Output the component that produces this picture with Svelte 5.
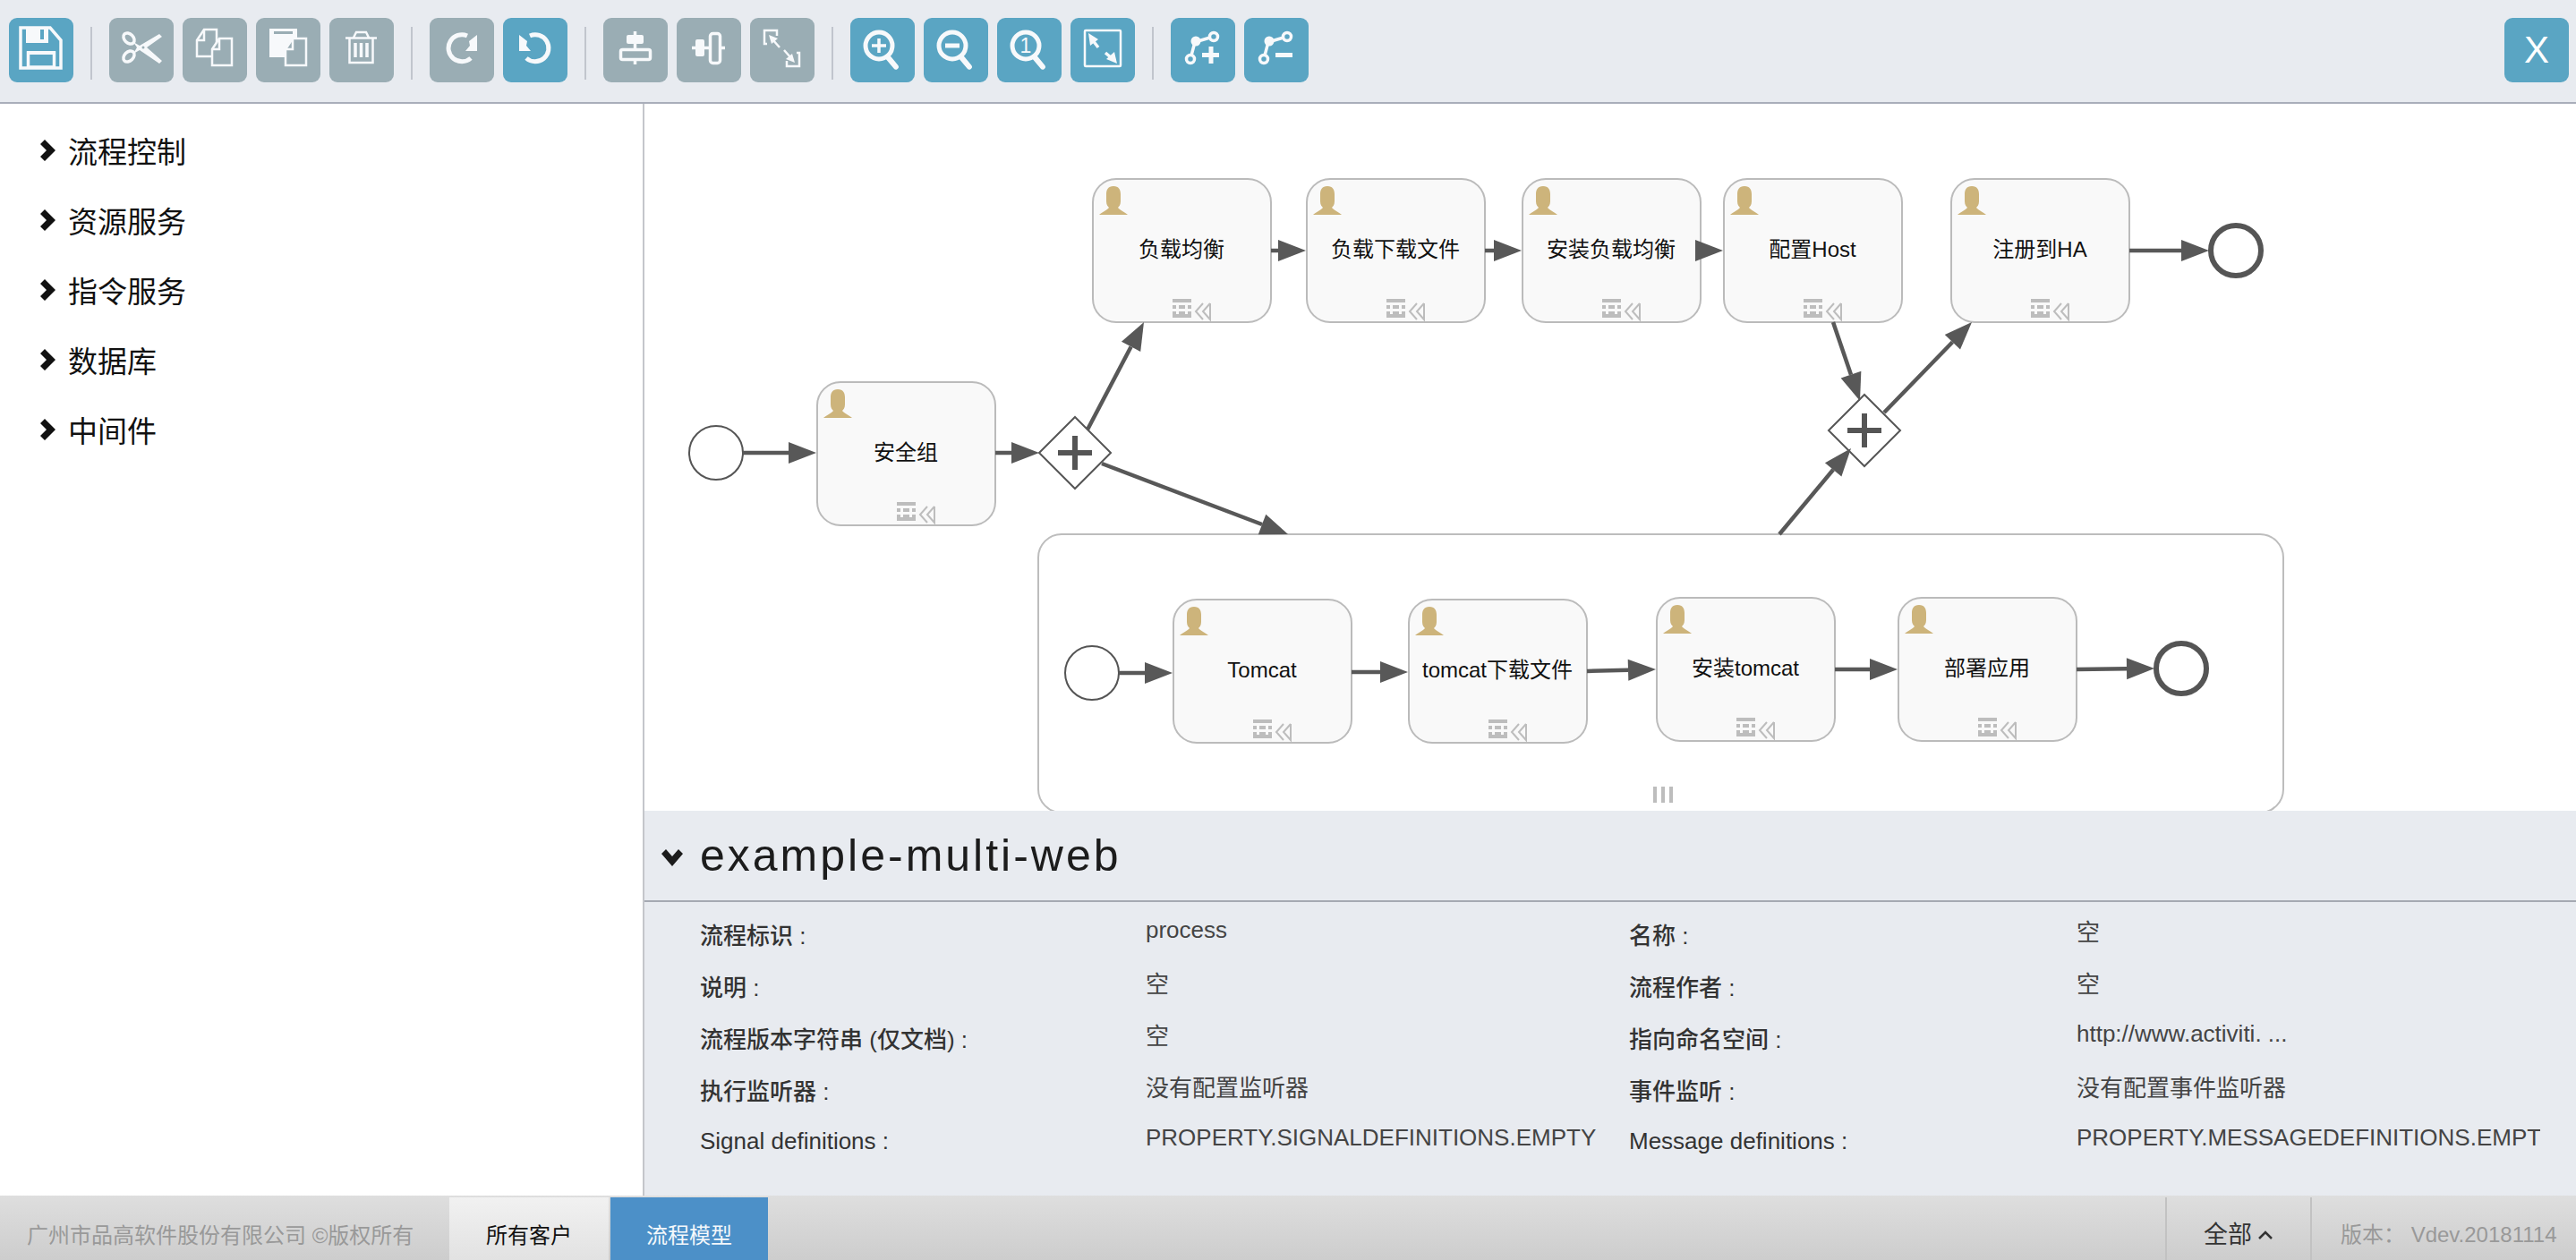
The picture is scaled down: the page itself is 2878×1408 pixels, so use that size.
<script>
  const tree = ['流程控制', '资源服务', '指令服务', '数据库', '中间件'];

  const tasks = [
    { x: 912, y: 426, label: '安全组' },
    { x: 1220, y: 199, label: '负载均衡' },
    { x: 1459, y: 199, label: '负载下载文件' },
    { x: 1700, y: 199, label: '安装负载均衡' },
    { x: 1925, y: 199, label: '配置Host' },
    { x: 2179, y: 199, label: '注册到HA' },
    { x: 1310, y: 669, label: 'Tomcat' },
    { x: 1573, y: 669, label: 'tomcat下载文件' },
    { x: 1850, y: 667, label: '安装tomcat' },
    { x: 2120, y: 667, label: '部署应用' }
  ];

  const flows = [
    [830, 506, 912, 506],
    [1112, 506, 1161, 506],
    [1215, 480, 1278, 360],
    [1231, 518, 1439, 597],
    [1420, 280, 1459, 280],
    [1659, 280, 1700, 280],
    [1900, 280, 1925, 280],
    [2048, 360, 2078, 448],
    [1988, 597, 2068, 501],
    [2105, 461, 2203, 360],
    [2379, 280, 2468, 280],
    [1250, 752, 1310, 752],
    [1510, 751, 1573, 751],
    [1773, 750, 1850, 748],
    [2050, 748, 2120, 748],
    [2320, 748, 2407, 747]
  ];

  const info = [
    ['流程标识 :', 'process', '名称 :', '空'],
    ['说明 :', '空', '流程作者 :', '空'],
    ['流程版本字符串 (仅文档) :', '空', '指向命名空间 :', 'http://www.activiti. ...'],
    ['执行监听器 :', '没有配置监听器', '事件监听 :', '没有配置事件监听器'],
    ['Signal definitions :', 'PROPERTY.SIGNALDEFINITIONS.EMPTY', 'Message definitions :', 'PROPERTY.MESSAGEDEFINITIONS.EMPTY']
  ];

  // line stops at the base of the arrow head
  function flow([x1, y1, x2, y2]) {
    const len = Math.hypot(x2 - x1, y2 - y1);
    const ux = (x2 - x1) / len;
    const uy = (y2 - y1) / len;
    const bx = x2 - ux * 31;
    const by = y2 - uy * 31;
    return {
      x1, y1, bx, by,
      head: `${x2},${y2} ${bx - uy * 12},${by + ux * 12} ${bx + uy * 12},${by - ux * 12}`
    };
  }
</script>

<div class="page">
  <header class="toolbar">
    <button class="tool blue" aria-label="save">
      <svg viewBox="0 0 72 72">
        <path class="line" d="M13 11H46L58 25V56H13Z" />
        <path class="solid" d="M19 11H44V28H19Z" />
        <path class="cut-blue" d="M35 13H39V24H35Z" />
        <path class="line" d="M21.500 39H50.500V55H21.500Z" />
        <path class="solid" d="M20 37H52V41H20Z" />
      </svg>
    </button>
    <i class="sep"></i>
    <button class="tool gray" aria-label="cut">
      <svg viewBox="0 0 72 72">
        <ellipse class="line" cx="22" cy="23" rx="7" ry="5" transform="rotate(45 22 23)" />
        <ellipse class="line" cx="22" cy="43" rx="7" ry="5" transform="rotate(-45 22 43)" />
        <path class="solid" d="M27 27L34 31L56 18L59 21L42 33L59 48L56 51L34 36L27 40L31 33Z" />
        <circle class="cut-gray" cx="38" cy="33" r="1.500" />
      </svg>
    </button>
    <button class="tool gray" aria-label="copy">
      <svg viewBox="0 0 72 72">
        <path class="line thin" d="M16 25L24 13H38V43H16Z" />
        <path class="line thin" d="M16 25H24V13" />
        <path class="line thin fill-gray" d="M33 35L41 23H55V53H33Z" />
        <path class="line thin" d="M33 35H41V23" />
      </svg>
    </button>
    <button class="tool gray" aria-label="paste">
      <svg viewBox="0 0 72 72">
        <path class="solid" d="M15 12H46V44H15Z" />
        <path class="cut-gray" d="M20 15H41V18H20Z" />
        <path class="line thin fill-gray" d="M33 35L41 23H56V53H33Z" />
        <path class="line thin" d="M33 35H41V23" />
      </svg>
    </button>
    <button class="tool gray" aria-label="delete">
      <svg viewBox="0 0 72 72">
        <path class="line thin" d="M18 22.500H53M27 22L30 16H41L44 22M22.500 23V50H48.500V23" />
        <path class="line" d="M29 28V44M35.500 28V44M42 28V44" />
      </svg>
    </button>
    <i class="sep"></i>
    <button class="tool gray" aria-label="redo">
      <svg viewBox="0 0 72 72">
        <path class="line wide" d="M42 20A15 15 0 1 0 46 45" />
        <path class="solid" d="M53 19V37H40L45 31L44 26Z" />
      </svg>
    </button>
    <button class="tool blue" aria-label="undo">
      <svg viewBox="0 0 72 72">
        <path class="line wide" d="M30 20A15 15 0 1 1 26 45" />
        <path class="solid" d="M18 19V37H31L26 31L27 26Z" />
      </svg>
    </button>
    <i class="sep"></i>
    <button class="tool gray" aria-label="align horizontal">
      <svg viewBox="0 0 72 72">
        <path class="line" d="M35.500 15V52" />
        <rect class="solid" x="26" y="19" width="19" height="10" rx="2" />
        <rect class="line fill-gray" x="19.500" y="35.500" width="33" height="11" rx="2" />
      </svg>
    </button>
    <button class="tool gray" aria-label="align vertical">
      <svg viewBox="0 0 72 72">
        <path class="line" d="M17 33.500H54" />
        <rect class="solid" x="21" y="24" width="10" height="19" rx="2" />
        <rect class="line fill-gray" x="37.500" y="17.500" width="11" height="33" rx="3" />
      </svg>
    </button>
    <button class="tool gray" aria-label="same size">
      <svg viewBox="0 0 72 72">
        <path class="line thin" d="M19 29H16V14H30V20" />
        <path class="line thin" d="M52 39H55V54H41V48" />
        <path class="line thin" d="M33 33L25 24M38 36L46 45" />
        <path class="solid" d="M21 19L31 23L24 29Z" />
        <path class="solid" d="M50 50L40 46L47 40Z" />
      </svg>
    </button>
    <i class="sep"></i>
    <button class="tool blue" aria-label="zoom in">
      <svg viewBox="0 0 72 72">
        <circle class="line wide" cx="32" cy="31" r="15" />
        <path class="line round" d="M42 44L54 51" transform="rotate(20 42 44)" />
        <path class="line" d="M32 23V39M24 31H40" />
      </svg>
    </button>
    <button class="tool blue" aria-label="zoom out">
      <svg viewBox="0 0 72 72">
        <circle class="line wide" cx="32" cy="31" r="15" />
        <path class="line round" d="M42 44L54 51" transform="rotate(20 42 44)" />
        <path class="line wide" d="M24 31H40" />
      </svg>
    </button>
    <button class="tool blue" aria-label="actual size">
      <svg viewBox="0 0 72 72">
        <circle class="line wide" cx="32" cy="31" r="15" />
        <path class="line round" d="M42 44L54 51" transform="rotate(20 42 44)" />
        <text class="one" x="32" y="39">1</text>
      </svg>
    </button>
    <button class="tool blue" aria-label="fit">
      <svg viewBox="0 0 72 72">
        <rect class="line thin" x="16" y="14" width="40" height="40" rx="1" />
        <path class="line" d="M31 33L24 24M39 39L46 45" />
        <path class="solid" d="M20 17L31 24L22 31Z" />
        <path class="solid" d="M52 51L40 46L49 38Z" />
      </svg>
    </button>
    <i class="sep"></i>
    <button class="tool blue" aria-label="add bendpoint">
      <svg viewBox="0 0 72 72">
        <path class="line" d="M23 42L27 27L44 22" />
        <circle class="line fill-blue" cx="22" cy="46" r="4.500" />
        <circle class="line fill-blue" cx="48" cy="21" r="4.500" />
        <circle class="solid" cx="28" cy="26" r="5.500" />
        <path class="line wide" d="M45 32V51M35 41.500H54" />
      </svg>
    </button>
    <button class="tool blue" aria-label="remove bendpoint">
      <svg viewBox="0 0 72 72">
        <path class="line" d="M23 42L27 27L44 22" />
        <circle class="line fill-blue" cx="22" cy="46" r="4.500" />
        <circle class="line fill-blue" cx="48" cy="21" r="4.500" />
        <circle class="solid" cx="28" cy="26" r="5.500" />
        <path class="line wide" d="M35 41.500H54" />
      </svg>
    </button>
    <button class="tool blue close">X</button>
  </header>

  <div class="main">
    <nav class="side">
      {#each tree as item}
        <div class="tree-row">
          <svg class="tree-arrow" viewBox="0 0 17 24"><path d="M0 5L5 0L17 12L5 24L0 19L7 12Z" /></svg>
          <span>{item}</span>
        </div>
      {/each}
    </nav>

    <section class="work">
      <svg class="canvas" viewBox="720 116 2158 790">
        <rect class="sub" x="1160" y="597" width="1391" height="311" rx="26" />
        <path class="sub-mark" d="M1849 879V897M1858 879V897M1867 879V897" />

        {#each tasks as t}
          <g transform="translate({t.x} {t.y})">
            <rect class="task" x="1" y="1" width="199" height="160" rx="26" />
            <path class="user" d="M24 9C18 9 16 13 16 18V26C16 30 18 32 19 33C17 36 11 38 8 41H40C37 38 31 36 29 33C30 32 32 30 32 26V18C32 13 30 9 24 9Z" />
            <text class="task-label" x="100" y="82">{t.label}</text>
            <path class="mark" d="M90 135H111V139H90ZM90 142H94V146H90V142ZM97 142H104V146H97ZM107 142H111V146H107ZM90 149H94V153H90ZM97 149H104V153H97ZM107 149H111V153H107ZM90 152H111V156H90Z" />
            <path class="mark-line" d="M124 140L116 149L124 158M132 140L124 149L132 158V140" />
          </g>
        {/each}

        <circle class="event" cx="800" cy="506" r="30" />
        <circle class="event" cx="1220" cy="752" r="30" />
        <circle class="event end" cx="2437" cy="747" r="28" />
        <circle class="event end" cx="2498" cy="280" r="28" />

        {#each [[1201, 506], [2083, 481]] as [cx, cy]}
          <path class="gateway" d="M{cx - 40} {cy}L{cx} {cy - 40}L{cx + 40} {cy}L{cx} {cy + 40}Z" />
          <path class="gateway-plus" d="M{cx - 19} {cy}H{cx + 19}M{cx} {cy - 19}V{cy + 19}" />
        {/each}

        {#each flows.map(flow) as f}
          <line class="flow" x1={f.x1} y1={f.y1} x2={f.bx} y2={f.by} />
          <polygon class="flow-head" points={f.head} />
        {/each}
      </svg>

      <div class="info">
        <div class="info-head">
          <svg class="head-arrow" viewBox="0 0 24 19"><path d="M0 5L5 0L12 8L19 0L24 5L12 19Z" /></svg>
          <h1>example-multi-web</h1>
        </div>
        <div class="props">
          {#each info as row}
            <div class="prop-label">{row[0]}</div>
            <div class="prop-value">{row[1]}</div>
            <div class="prop-label">{row[2]}</div>
            <div class="prop-value">{row[3]}</div>
          {/each}
        </div>
      </div>
    </section>
  </div>

  <footer class="bar">
    <div class="copy">广州市品高软件股份有限公司 ©版权所有</div>
    <div class="tab light">所有客户</div>
    <div class="tab active">流程模型</div>
    <div class="filter">
      全部
      <svg viewBox="0 0 16 10"><path d="M1 9L8 2L15 9" /></svg>
    </div>
    <div class="version">版本： Vdev.20181114</div>
  </footer>
</div>

<style>
  :global(body) {
    margin: 0;
  }

  .page {
    width: 2878px;
    height: 1408px;
    display: flex;
    flex-direction: column;
    overflow: hidden;
    font-family: "Liberation Sans", "Noto Sans CJK SC", sans-serif;
    color: #333;
  }

  .toolbar {
    height: 114px;
    box-sizing: content-box;
    border-bottom: 2px solid #a9aeba;
    background: #e8ebf0;
    display: flex;
    align-items: flex-start;
    gap: 10px;
    padding-left: 10px;
    padding-right: 8px;
    flex: none;
  }

  .tool {
    width: 72px;
    height: 72px;
    margin-top: 20px;
    padding: 0;
    border: 0;
    border-radius: 9px;
    flex: none;
  }

  .tool svg {
    display: block;
    width: 72px;
    height: 72px;
  }

  .blue {
    background: #5aa5c3;
  }

  .gray {
    background: #9aadb4;
  }

  .close {
    margin-left: auto;
    color: #fff;
    font-family: "Liberation Sans", sans-serif;
    font-size: 42px;
    line-height: 72px;
  }

  .sep {
    width: 2px;
    height: 59px;
    margin: 30px 9px 0;
    background: #c1c5cd;
    flex: none;
  }

  .line {
    fill: none;
    stroke: #f7f9fb;
    stroke-width: 3.5;
  }

  .thin {
    stroke-width: 2.500;
  }

  .wide {
    stroke-width: 5;
  }

  .round {
    stroke-width: 6;
    stroke-linecap: round;
  }

  .solid {
    fill: #f7f9fb;
  }

  .fill-gray {
    fill: #9aadb4;
  }

  .fill-blue {
    fill: #5aa5c3;
  }

  .cut-blue {
    fill: #5aa5c3;
  }

  .cut-gray {
    fill: #9aadb4;
  }

  .one {
    fill: #f7f9fb;
    font-size: 23px;
    text-anchor: middle;
  }

  .main {
    flex: 1;
    display: flex;
    min-height: 0;
  }

  .side {
    width: 718px;
    border-right: 2px solid #c4c6cb;
    background: #fff;
    padding-top: 13px;
    flex: none;
  }

  .tree-row {
    height: 78px;
    display: flex;
    align-items: center;
    padding-left: 45px;
    gap: 14px;
    font-size: 33px;
    color: #111;
  }

  .tree-arrow {
    width: 17px;
    height: 24px;
  }

  .tree-arrow path {
    fill: #111;
  }

  .work {
    flex: 1;
    min-width: 0;
    display: flex;
    flex-direction: column;
  }

  .canvas {
    display: block;
    width: 2158px;
    height: 790px;
    background: #fff;
    flex: none;
  }

  .sub {
    fill: #fff;
    stroke: #bdbdbd;
    stroke-width: 2;
  }

  .sub-mark {
    fill: none;
    stroke: #bdbdbd;
    stroke-width: 4;
  }

  .task {
    fill: #f9f9f9;
    stroke: #bbb;
    stroke-width: 2;
  }

  .user {
    fill: #cdb47b;
  }

  .task-label {
    fill: #111;
    font-size: 24px;
    text-anchor: middle;
    dominant-baseline: middle;
  }

  .mark {
    fill: #bdbdbd;
  }

  .mark-line {
    fill: none;
    stroke: #bdbdbd;
    stroke-width: 2;
  }

  .event {
    fill: #fff;
    stroke: #555;
    stroke-width: 2;
  }

  .end {
    stroke-width: 6;
  }

  .gateway {
    fill: #fff;
    stroke: #555;
    stroke-width: 2;
  }

  .gateway-plus {
    fill: none;
    stroke: #555;
    stroke-width: 6;
  }

  .flow {
    stroke: #585858;
    stroke-width: 4.500;
  }

  .flow-head {
    fill: #585858;
  }

  .info {
    flex: 1;
    background: #e8ebf0;
    min-height: 0;
  }

  .info-head {
    height: 102px;
    border-bottom: 2px solid #a5a9b2;
    box-sizing: border-box;
    display: flex;
    align-items: center;
    padding-left: 19px;
    gap: 19px;
  }

  .head-arrow {
    width: 24px;
    height: 19px;
    margin-top: 4px;
  }

  .head-arrow path {
    fill: #1c1c1c;
  }

  h1 {
    margin: 0;
    font-size: 50px;
    font-weight: 400;
    letter-spacing: 3px;
    color: #1c1c1c;
  }

  .props {
    display: grid;
    grid-template-columns: 498px 540px 500px 518px;
    grid-auto-rows: 58px;
    padding: 6px 0 0 62px;
    font-size: 26px;
  }

  .prop-label {
    display: flex;
    align-items: center;
    font-weight: 500;
    color: #333;
    white-space: nowrap;
  }

  .prop-value {
    display: flex;
    align-items: center;
    padding-bottom: 8px;
    color: #444;
    white-space: nowrap;
    overflow: hidden;
  }

  .bar {
    height: 72px;
    flex: none;
    display: flex;
    align-items: stretch;
    background: linear-gradient(#dedede, #cdcdcd);
    font-size: 24px;
    box-sizing: border-box;
    padding-top: 2px;
  }

  .copy {
    width: 502px;
    padding-left: 30px;
    box-sizing: border-box;
    display: flex;
    align-items: center;
    color: #999;
    white-space: nowrap;
    padding-top: 10px;
  }

  .tab {
    width: 178px;
    display: flex;
    align-items: center;
    justify-content: center;
    padding-top: 10px;
    box-sizing: border-box;
  }

  .light {
    background: linear-gradient(#f1f1f1, #e2e2e2);
    color: #111;
  }

  .active {
    width: 176px;
    margin-left: 2px;
    background: #4c90c8;
    color: #f4f8fb;
  }

  .filter {
    margin-left: auto;
    width: 164px;
    box-sizing: border-box;
    border-left: 2px solid #c2c2c2;
    border-right: 2px solid #c2c2c2;
    display: flex;
    align-items: center;
    padding: 8px 0 0 41px;
    font-size: 27px;
    color: #333;
    gap: 7px;
  }

  .filter svg {
    width: 16px;
    height: 10px;
    margin-top: 6px;
  }

  .filter path {
    fill: none;
    stroke: #333;
    stroke-width: 2.500;
  }

  .version {
    width: 295px;
    box-sizing: border-box;
    padding: 8px 0 0 32px;
    display: flex;
    align-items: center;
    color: #999;
    white-space: pre;
  }
</style>
